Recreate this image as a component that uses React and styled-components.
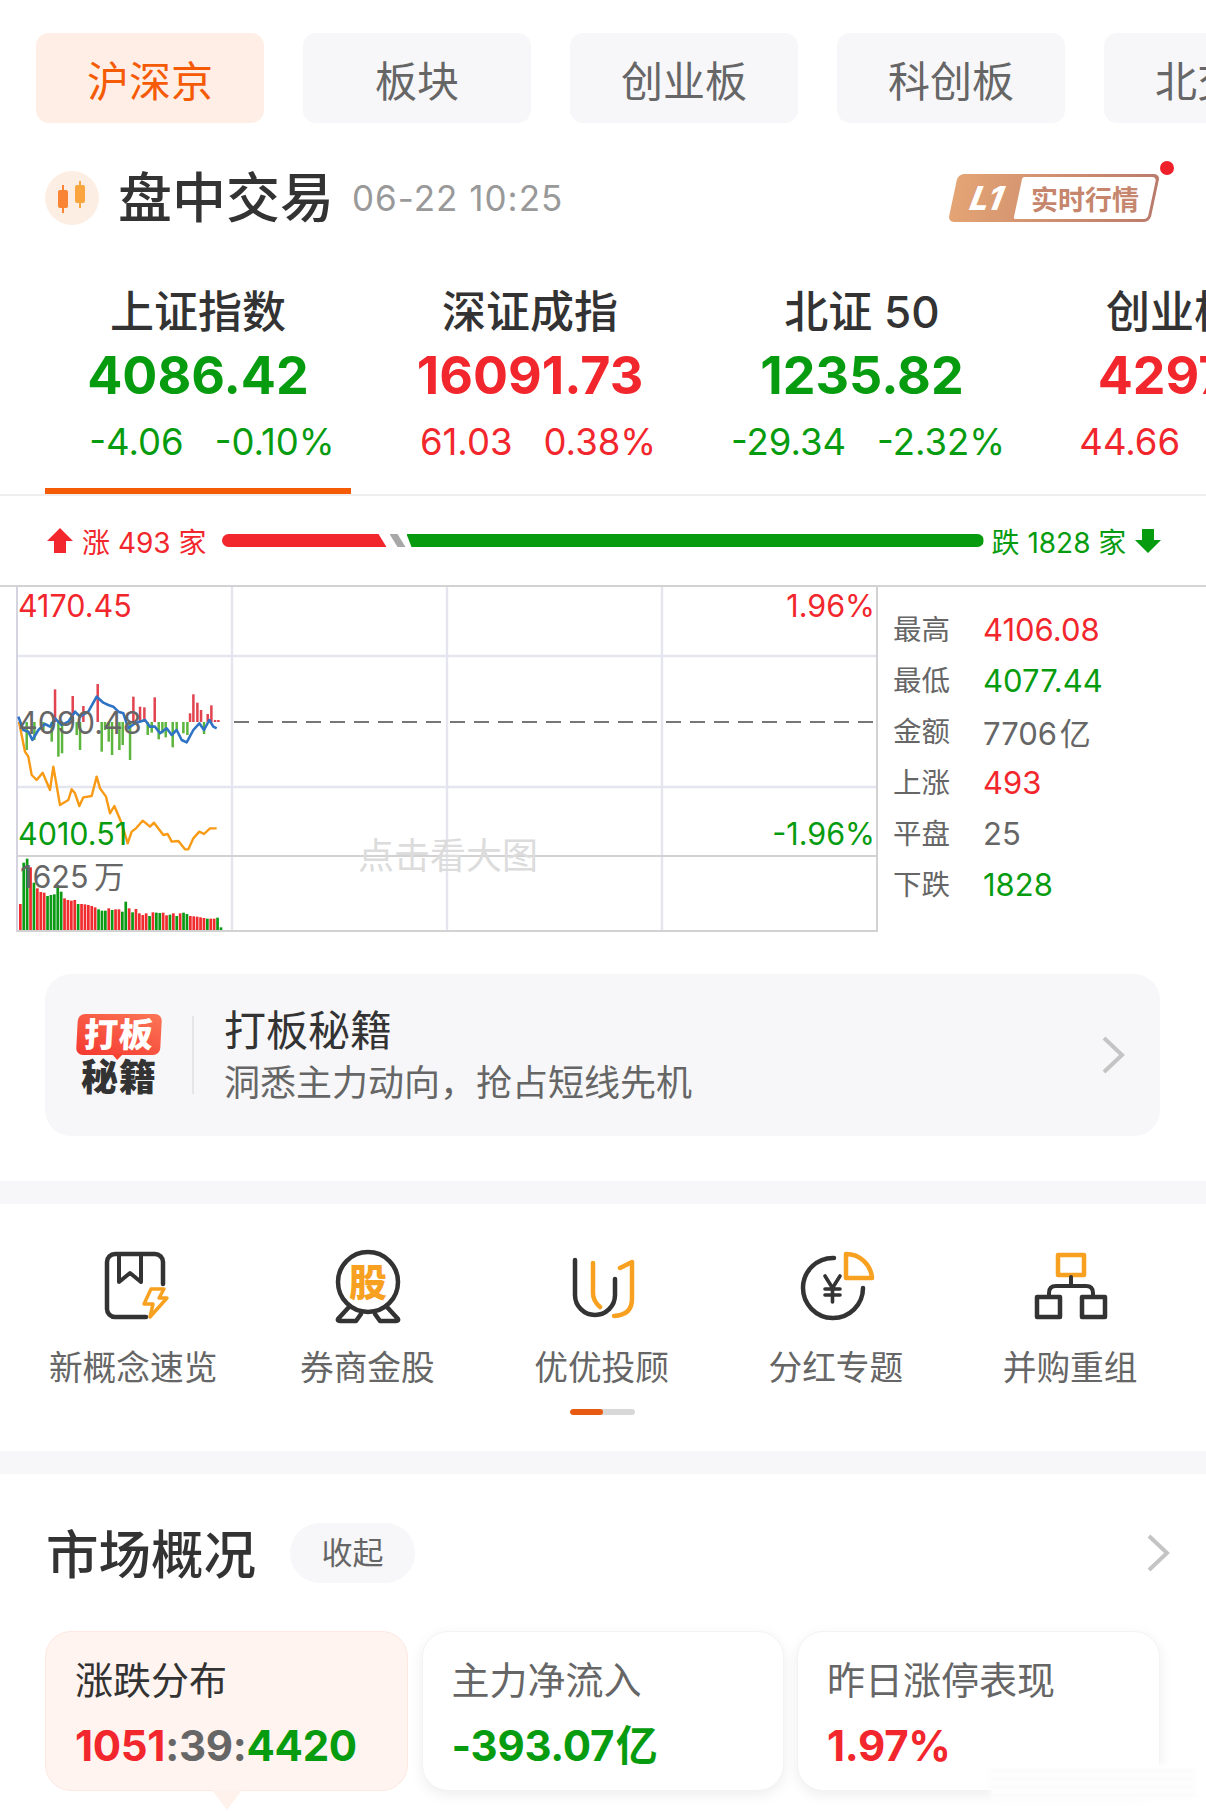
import React from 'react';
import styled, { createGlobalStyle } from 'styled-components';

const RED = '#f2272d';
const GREEN = '#079c0f';
const GRAY = '#666';
const toneColor = { up: RED, down: GREEN, flat: GRAY };

const GlobalStyle = createGlobalStyle`
  html, body { margin: 0; padding: 0; background: #fff; }
  body { font-family: Inter, "Noto Sans CJK SC", sans-serif; color: #333; }
  * { box-sizing: border-box; }
`;

const Page = styled.div`
  position: relative;
  width: 1206px;
  height: 1812px;
  overflow: hidden;
  background: #fff;
`;

const Tabs = styled.div`
  display: flex;
  gap: 39px;
  padding: 33px 0 0 36px;
`;
const Tab = styled.div`
  flex: 0 0 228px;
  height: 90px;
  display: flex;
  align-items: center;
  justify-content: center;
  border-radius: 13px;
  font-size: 42px;
  background: ${p => (p.$active ? '#ffeee6' : '#f7f7f9')};
  color: ${p => (p.$active ? '#f55a05' : GRAY)};
`;

const TradeHeader = styled.div`
  display: flex;
  align-items: center;
  height: 66px;
  margin-top: 42px;
  padding: 0 51px 0 45px;
`;
const TradeIcon = styled.svg`
  width: 54px;
  height: 54px;
  flex: none;
`;
const TradeTitle = styled.div`
  margin: 2px 0 0 19px;
  font-size: 54px;
  font-weight: 500;
  line-height: 66px;
  color: #333;
`;
const TradeTime = styled.div`
  margin-left: 18px;
  font-size: 35px;
  letter-spacing: 1px;
  color: #999;
`;
const BadgeWrap = styled.div`
  position: relative;
  width: 202px;
  height: 48px;
  margin-left: auto;
`;
const Badge = styled.div`
  display: flex;
  height: 100%;
  padding: 3px;
  border-radius: 6px;
  transform: skewX(-12deg);
  background: linear-gradient(90deg, #e4a474, #ba7b6c);
`;
const BadgeLevel = styled.div`
  flex: 0 0 62px;
  display: flex;
  align-items: center;
  justify-content: center;
  font-size: 33px;
  font-weight: 800;
  font-style: italic;
  color: #fff;
`;
const BadgeText = styled.div`
  flex: 1;
  display: flex;
  align-items: center;
  justify-content: center;
  border-radius: 2px 4px 4px 2px;
  background: #fff;
  font-size: 27px;
  font-weight: 700;
  color: #c5866d;
  span { display: block; transform: skewX(12deg); }
`;
const BadgeDot = styled.i`
  position: absolute;
  left: 207px;
  top: -13px;
  width: 14px;
  height: 14px;
  border-radius: 50%;
  background: #f0202a;
`;

const IndexRow = styled.div`
  display: flex;
  gap: 26px;
  height: 265px;
  padding-left: 45px;
  border-bottom: 2px solid #eee;
`;
const IndexItem = styled.div`
  flex: 0 0 306px;
  height: 263px;
  padding-top: 56px;
  display: flex;
  flex-direction: column;
  align-items: center;
  border-bottom: 6px solid ${p => (p.$active ? '#f55a05' : 'transparent')};
`;
const IndexName = styled.div`
  height: 50px;
  line-height: 50px;
  font-size: 44px;
  font-weight: 500;
  color: #333;
  white-space: nowrap;
`;
const IndexValue = styled.div`
  margin-top: 7px;
  height: 64px;
  line-height: 64px;
  font-size: 52px;
  font-weight: 700;
  white-space: nowrap;
  color: ${p => toneColor[p.$tone]};
`;
const IndexChange = styled.div`
  display: flex;
  gap: 31px;
  margin: 12px 0 0 ${p => p.$shift * 2}px;
  height: 44px;
  line-height: 44px;
  font-size: 36.5px;
  white-space: nowrap;
  color: ${p => toneColor[p.$tone]};
`;

const Breadth = styled.div`
  display: flex;
  align-items: center;
  height: 89px;
  padding: 0 46px;
`;
const BreadthLabel = styled.div`
  display: flex;
  align-items: center;
  gap: 8px;
  font-size: 28px;
  white-space: nowrap;
  color: ${p => toneColor[p.$tone]};
`;
const BreadthBar = styled.div`
  flex: 0 0 762px;
  margin: 0 ${p => p.$right}px 0 ${p => p.$left}px;
  display: flex;
  height: 13px;
`;
const BarRise = styled.div`
  flex: 0 0 165px;
  background: ${RED};
  border-radius: 7px 0 0 7px;
  clip-path: polygon(0 0, 157px 0, 100% 100%, 0 100%);
`;
const BarFlat = styled.div`
  flex: 0 0 16px;
  margin-left: 3px;
  background: #a8a8a8;
  clip-path: polygon(0 0, 8px 0, 100% 100%, 8px 100%);
`;
const BarFall = styled.div`
  flex: 1;
  margin-left: 1px;
  background: ${GREEN};
  border-radius: 0 7px 7px 0;
  clip-path: polygon(0 0, 100% 0, 100% 100%, 5px 100%);
`;

const Market = styled.div`
  display: flex;
  border-top: 2px solid #d4d4d4;
  padding-left: 16px;
`;
const ChartBox = styled.div`
  position: relative;
  flex: 0 0 862px;
  height: 345px;
  margin-top: -2px;
`;
const ChartSvg = styled.svg`
  display: block;
  width: 862px;
  height: 348px;
`;
const ChartLabel = styled.span`
  position: absolute;
  font-size: 30.5px;
  line-height: 34px;
  word-spacing: -3px;
  white-space: nowrap;
  top: ${p => p.$top}px;
  ${p => (p.$right !== undefined ? `right: ${p.$right}px;` : `left: ${p.$left}px;`)}
  color: ${p => toneColor[p.$tone]};
`;
const ChartHint = styled.span`
  position: absolute;
  left: 342px;
  top: 249px;
  font-size: 36px;
  line-height: 44px;
  color: #dcdcdc;
  white-space: nowrap;
`;
const Stats = styled.div`
  padding: 17px 0 0 15px;
`;
const StatRow = styled.div`
  display: flex;
  align-items: center;
  height: 51px;
`;
const StatLabel = styled.span`
  flex: 0 0 90px;
  margin-top: -4px;
  font-size: 28.5px;
  color: ${GRAY};
`;
const StatValue = styled.span`
  font-size: 31px;
  word-spacing: -6px;
  color: ${p => toneColor[p.$tone]};
`;

const Promo = styled.div`
  display: flex;
  align-items: center;
  height: 162px;
  margin: 44px 46px 0 45px;
  padding: 0 35px 0 31px;
  border-radius: 26px;
  background: #f7f7f9;
`;
const PromoLogo = styled.div`
  flex: 0 0 86px;
  display: flex;
  flex-direction: column;
  align-items: center;
`;
const PromoTag = styled.div`
  position: relative;
  width: 84px;
  height: 41px;
  border-radius: 7px;
  background: linear-gradient(20deg, #f5382f, #fb7656);
  transform: skewX(-3deg);
  color: #fff;
  font-size: 34px;
  font-weight: 900;
  line-height: 41px;
  text-align: center;
  letter-spacing: 1px;
  &::after {
    content: '';
    position: absolute;
    left: 36px;
    bottom: -5px;
    width: 11px;
    height: 6px;
    background: #f5432f;
    clip-path: polygon(0 0, 100% 0, 50% 100%);
  }
`;
const PromoName = styled.div`
  margin-top: 4px;
  font-size: 37px;
  line-height: 38px;
  font-weight: 900;
  color: #333;
  letter-spacing: 1px;
  white-space: nowrap;
`;
const PromoDivider = styled.div`
  width: 2px;
  height: 78px;
  margin: 0 30px;
  background: #e6e6e8;
`;
const PromoText = styled.div`
  flex: 1;
`;
const PromoTitle = styled.div`
  font-size: 42px;
  line-height: 56px;
  color: #333;
`;
const PromoSub = styled.div`
  font-size: 36px;
  line-height: 48px;
  color: ${GRAY};
`;
const Chevron = styled.svg`
  flex: none;
  width: 24px;
  height: 38px;
`;

const Band = styled.div`
  height: 23px;
  background: #f7f7f9;
  margin-top: ${p => p.$top || 0}px;
`;

const Shortcuts = styled.div`
  height: 247px;
  padding: 43px 0 0 16px;
`;
const ShortcutGrid = styled.div`
  display: grid;
  grid-template-columns: repeat(5, 234.25px);
`;
const Shortcut = styled.div`
  display: flex;
  flex-direction: column;
  align-items: center;
`;
const ShortcutIcon = styled.svg`
  width: 80px;
  height: 80px;
  fill: none;
  stroke-linecap: round;
  stroke-linejoin: round;
`;
const ShortcutName = styled.div`
  margin-top: 21px;
  font-size: 33.7px;
  line-height: 40px;
  color: ${GRAY};
  white-space: nowrap;
`;
const Pager = styled.div`
  width: 65px;
  height: 6px;
  margin: 21px 0 0 554px;
  border-radius: 3px;
  background: #d8d8d8;
  overflow: hidden;
  &::before {
    content: '';
    display: block;
    width: 33px;
    height: 6px;
    border-radius: 3px;
    background: #e85a12;
  }
`;

const Overview = styled.div`
  padding: 49px 36px 0 46px;
`;
const OverviewHead = styled.div`
  display: flex;
  align-items: center;
  height: 60px;
`;
const OverviewTitle = styled.div`
  margin-top: -4px;
  font-size: 52.5px;
  font-weight: 500;
  color: #333;
`;
const Collapse = styled.div`
  width: 125px;
  height: 60px;
  margin-left: 34px;
  border-radius: 30px;
  background: #f7f7f9;
  color: ${GRAY};
  font-size: 31px;
  line-height: 60px;
  text-align: center;
`;
const OverviewSpacer = styled.div`
  flex: 1;
`;
const OverviewGrid = styled.div`
  display: grid;
  grid-template-columns: 363px 362px 362.5px;
  gap: 13.5px;
  margin: 48px 0 0 -1px;
`;
const OverviewCard = styled.div`
  position: relative;
  height: 160px;
  padding: 25px 0 0 29px;
  border-radius: 26px;
  background: ${p => (p.$active ? '#fff4f0' : '#fff')};
  border: 1px solid ${p => (p.$active ? '#fde9e1' : '#f3f3f3')};
  box-shadow: ${p => (p.$active ? 'none' : '0 4px 14px rgba(0, 0, 0, 0.07)')};
  ${p => p.$active && `
    &::after {
      content: '';
      position: absolute;
      left: 166px;
      bottom: -20px;
      width: 30px;
      height: 20px;
      background: #fff1ec;
      clip-path: polygon(0 0, 100% 0, 50% 100%);
    }
  `}
`;
const CardTitle = styled.div`
  font-size: 38px;
  line-height: 46px;
  color: ${p => (p.$active ? '#333' : GRAY)};
`;
const CardValue = styled.div`
  margin-top: 17px;
  font-size: 42px;
  font-weight: 700;
  line-height: 52px;
  white-space: nowrap;
  word-spacing: -8px;
  letter-spacing: -0.3px;
`;
const Tone = styled.span`
  color: ${p => toneColor[p.$tone]};
`;
const Watermark = styled.div`
  position: absolute;
  left: 990px;
  top: 1764px;
  width: 206px;
  height: 36px;
  background: repeating-linear-gradient(180deg, #fff 0 6px, #f4f4f4 6px 8px);
  filter: blur(2px);
`;

const tabs = ['沪深京', '板块', '创业板', '科创板', '北交所'];

const indices = [
  { name: '上证指数', value: '4086.42', change: '-4.06', pct: '-0.10%', tone: 'down', active: true, shift: 14 },
  { name: '深证成指', value: '16091.73', change: '61.03', pct: '0.38%', tone: 'up', shift: 8 },
  { name: '北证 50', value: '1235.82', change: '-29.34', pct: '-2.32%', tone: 'down', shift: 6 },
  { name: '创业板指', value: '4297.15', change: '44.66', pct: '1.05%', tone: 'up', shift: 4 },
];

const stats = [
  ['最高', '4106.08', 'up'],
  ['最低', '4077.44', 'down'],
  ['金额', '7706 亿', 'flat'],
  ['上涨', '493', 'up'],
  ['平盘', '25', 'flat'],
  ['下跌', '1828', 'down'],
];

// chart data read off the picture, in 3x crop coordinates (x, 580 + y / 3)
const blueLine = [[55,410],[70,450],[85,455],[97,480],[115,450],[135,432],[150,440],[165,415],[185,435],[205,425],[225,395],[240,410],[265,395],[290,350],[310,368],[325,375],[340,380],[355,395],[370,400],[385,445],[405,430],[435,420],[450,440],[465,440],[480,460],[500,445],[515,465],[530,450],[545,480],[560,487],[580,450],[598,430],[612,450],[628,420],[640,440],[650,445]];
const orangeLine = [[57,425],[75,515],[85,530],[95,585],[110,600],[128,578],[150,630],[160,560],[180,675],[205,660],[215,628],[225,640],[238,678],[250,652],[275,648],[290,590],[300,625],[318,650],[330,700],[343,678],[365,730],[383,790],[395,755],[408,745],[428,722],[450,740],[462,728],[490,765],[503,762],[515,785],[535,783],[555,808],[565,808],[580,775],[598,755],[612,762],[630,745],[650,745]];
const riseBars = [[165,328],[218,348],[250,378],[293,312],[400,350],[420,380],[433,382],[464,352],[570,400],[580,343],[592,368],[603,390],[623,402],[634,376],[645,420],[655,420]];
const fallBars = [[80,510],[103,480],[130,450],[155,485],[175,530],[186,520],[230,465],[240,510],[305,515],[315,450],[326,485],[336,525],[358,510],[368,495],[390,540],[443,465],[455,458],[476,478],[487,460],[497,472],[518,502],[530,450],[550,460],[562,465],[612,462]];
const volumes = [['r',972],['g',848],['g',836],['r',862],['g',908],['r',925],['r',936],['r',938],['g',948],['g',945],['g',943],['g',915],['g',935],['r',955],['r',960],['r',962],['r',960],['g',972],['r',972],['r',973],['r',975],['r',978],['r',982],['g',988],['g',992],['g',992],['r',985],['g',990],['r',988],['r',988],['g',995],['g',965],['r',985],['g',997],['r',987],['r',1000],['r',1005],['r',1000],['g',1008],['r',997],['g',998],['g',999],['r',998],['r',1006],['g',1004],['r',1000],['g',1008],['r',1000],['g',998],['g',1002],['r',1008],['r',1009],['r',1010],['r',1012],['r',1014],['g',1016],['r',1016],['r',1016],['g',1013],['g',1042]];

const px = x => x / 3;
const py = y => 580 + y / 3;
const points = list => list.map(([x, y]) => `${px(x)},${py(y)}`).join(' ');

const MinuteChart = () => (
  <ChartSvg viewBox="16 585 862 348">
    <g stroke="#e4e5ee" strokeWidth="2.4">
      <path d="M17 656H877M17 787H877" />
      <path d="M232 587V930M447 587V930M662 587V930" />
    </g>
    <path d="M16 586H878M16 856H878M16 931H878M877 586V931" stroke="#d2d2d2" strokeWidth="2" fill="none" />
    <path d="M17 586V931" stroke="#d3d4e0" strokeWidth="2" />
    <path d="M234 722H877" stroke="#777" strokeWidth="1.8" strokeDasharray="15 9" />
    {riseBars.map(([x, y]) => (
      <rect key={x} x={px(x) - 1.2} y={py(y)} width="2.5" height={722 - py(y)} fill="#e2444f" />
    ))}
    {fallBars.map(([x, y]) => (
      <rect key={x} x={px(x) - 1.2} y="722" width="2.5" height={py(y) - 722} fill="#5cb53c" />
    ))}
    <polyline points={points(orangeLine)} fill="none" stroke="#f89a14" strokeWidth="2.4" strokeLinejoin="round" />
    <polyline points={points(blueLine)} fill="none" stroke="#2f73c4" strokeWidth="2.6" strokeLinejoin="round" />
    {volumes.map(([c, y], i) => (
      <rect key={i} x={19 + i * 3.4} y={py(y)} width="2.7" height={930 - py(y)} fill={c === 'r' ? '#f02c2f' : '#0a9a13'} />
    ))}
  </ChartSvg>
);

const Arrow = ({ down, color }) => (
  <svg width="28" height="26" viewBox="0 0 28 26" style={{ flex: 'none' }}>
    <path
      d={down ? 'M8 1H20V12H27L14 25L1 12H8Z' : 'M8 25H20V13H27L14 0L1 13H8Z'}
      fill={color}
    />
  </svg>
);

const ChevronIcon = () => (
  <Chevron viewBox="0 0 24 38">
    <polyline points="3,2 21,19 3,36" fill="none" stroke="#c4c4c4" strokeWidth="4" />
  </Chevron>
);

const DARK = '#333';
const AMBER = '#f8a01f';

const BookIcon = () => (
  <ShortcutIcon viewBox="0 0 80 80">
    <path d="M70 37V15a8 8 0 0 0-8-8H22a8 8 0 0 0-8 8V62a8 8 0 0 0 8 8H53" stroke={DARK} strokeWidth="4.5" />
    <path d="M26 8V35L37 26L48 35V8" stroke={DARK} strokeWidth="4" />
    <path d="M58 42H71L66 51H74L57 70L60 57H51Z" stroke={AMBER} strokeWidth="3.4" />
  </ShortcutIcon>
);

const MedalIcon = () => (
  <ShortcutIcon viewBox="0 0 80 80">
    <circle cx="41" cy="35" r="30" stroke={DARK} strokeWidth="4.5" />
    <path d="M22 60L11 72Q10 74 13 74H29L34 67M60 60L71 72Q72 74 69 74H53L48 67" stroke={DARK} strokeWidth="4.5" />
    <text x="41" y="49" textAnchor="middle" fontSize="38" fontWeight="900" fill={AMBER} stroke="none" fontFamily='"Noto Sans CJK SC", sans-serif'>股</text>
  </ShortcutIcon>
);

const AdvisorIcon = () => (
  <ShortcutIcon viewBox="0 0 80 80">
    <path d="M13 13V48a20 20 0 0 0 40 0V32" stroke={DARK} strokeWidth="4.5" />
    <path d="M31 16V46Q31 54 38 60" stroke={AMBER} strokeWidth="4.5" />
    <path d="M58 21L70 15V52Q70 68 52 69" stroke={AMBER} strokeWidth="4.5" />
  </ShortcutIcon>
);

const DividendIcon = () => (
  <ShortcutIcon viewBox="0 0 80 80">
    <path d="M38 11A30 30 0 1 0 67 41" stroke={DARK} strokeWidth="4.5" />
    <path d="M29 29L36.5 41L44 29M29 42H44M29 48H44M36.5 41V55" stroke={DARK} strokeWidth="3.6" />
    <path d="M50 7A26 26 0 0 1 76 31H50Z" stroke={AMBER} strokeWidth="4.5" />
  </ShortcutIcon>
);

const MergeIcon = () => (
  <ShortcutIcon viewBox="0 0 80 80">
    <rect x="28" y="8" width="26" height="20" stroke={AMBER} strokeWidth="4.5" />
    <path d="M41 30V39M19 48V46Q19 39 26 39H56Q63 39 63 46V48" stroke={DARK} strokeWidth="4" />
    <rect x="7" y="50" width="23" height="20" stroke={DARK} strokeWidth="4.5" />
    <rect x="52" y="50" width="23" height="20" stroke={DARK} strokeWidth="4.5" />
  </ShortcutIcon>
);

const shortcuts = [
  ['新概念速览', BookIcon],
  ['券商金股', MedalIcon],
  ['优优投顾', AdvisorIcon],
  ['分红专题', DividendIcon],
  ['并购重组', MergeIcon],
];

const App = () => (
  <Page>
    <GlobalStyle />
    <Tabs>
      {tabs.map((t, i) => (
        <Tab key={t} $active={i === 0}>{t}</Tab>
      ))}
    </Tabs>

    <TradeHeader>
      <TradeIcon viewBox="0 0 54 54">
        <circle cx="27" cy="27" r="27" fill="#fdeee4" />
        <path d="M18 14V42" stroke="#f98534" strokeWidth="2" />
        <rect x="13" y="19" width="10" height="18" rx="2" fill="#f98534" />
        <path d="M35 10V37" stroke="#fba53f" strokeWidth="2" />
        <rect x="30" y="14" width="10" height="18" rx="2" fill="#fba53f" />
      </TradeIcon>
      <TradeTitle>盘中交易</TradeTitle>
      <TradeTime>06-22 10:25</TradeTime>
      <BadgeWrap>
        <Badge>
          <BadgeLevel>L1</BadgeLevel>
          <BadgeText><span>实时行情</span></BadgeText>
        </Badge>
        <BadgeDot />
      </BadgeWrap>
    </TradeHeader>

    <IndexRow>
      {indices.map(item => (
        <IndexItem key={item.name} $active={item.active}>
          <IndexName>{item.name}</IndexName>
          <IndexValue $tone={item.tone}>{item.value}</IndexValue>
          <IndexChange $tone={item.tone} $shift={item.shift}>
            <span>{item.change}</span>
            <span>{item.pct}</span>
          </IndexChange>
        </IndexItem>
      ))}
    </IndexRow>

    <Breadth>
      <BreadthLabel $tone="up">
        <Arrow color={RED} />
        <span>涨 493 家</span>
      </BreadthLabel>
      <BreadthBar $left={15} $right={8}>
        <BarRise />
        <BarFlat />
        <BarFall />
      </BreadthBar>
      <BreadthLabel $tone="down">
        <span>跌 1828 家</span>
        <Arrow down color={GREEN} />
      </BreadthLabel>
    </Breadth>

    <Market>
      <ChartBox>
        <MinuteChart />
        <ChartLabel $left={2} $top={4} $tone="up">4170.45</ChartLabel>
        <ChartLabel $right={3} $top={4} $tone="up">1.96%</ChartLabel>
        <ChartLabel $left={2} $top={121} $tone="flat">4090.48</ChartLabel>
        <ChartLabel $left={2} $top={232} $tone="down">4010.51</ChartLabel>
        <ChartLabel $right={3} $top={232} $tone="down">-1.96%</ChartLabel>
        <ChartLabel $left={4} $top={275} $tone="flat">1625 万</ChartLabel>
        <ChartHint>点击看大图</ChartHint>
      </ChartBox>
      <Stats>
        {stats.map(([label, value, tone]) => (
          <StatRow key={label}>
            <StatLabel>{label}</StatLabel>
            <StatValue $tone={tone}>{value}</StatValue>
          </StatRow>
        ))}
      </Stats>
    </Market>

    <Promo>
      <PromoLogo>
        <PromoTag>打板</PromoTag>
        <PromoName>秘籍</PromoName>
      </PromoLogo>
      <PromoDivider />
      <PromoText>
        <PromoTitle>打板秘籍</PromoTitle>
        <PromoSub>{'洞悉主力动向\uFF0C抢占短线先机'}</PromoSub>
      </PromoText>
      <ChevronIcon />
    </Promo>

    <Band $top={45} />

    <Shortcuts>
      <ShortcutGrid>
        {shortcuts.map(([name, Icon]) => (
          <Shortcut key={name}>
            <Icon />
            <ShortcutName>{name}</ShortcutName>
          </Shortcut>
        ))}
      </ShortcutGrid>
      <Pager />
    </Shortcuts>

    <Band />

    <Overview>
      <OverviewHead>
        <OverviewTitle>市场概况</OverviewTitle>
        <Collapse>收起</Collapse>
        <OverviewSpacer />
        <ChevronIcon />
      </OverviewHead>
      <OverviewGrid>
        <OverviewCard $active>
          <CardTitle $active>涨跌分布</CardTitle>
          <CardValue>
            <Tone $tone="up">1051</Tone>
            <Tone $tone="flat">:39:</Tone>
            <Tone $tone="down">4420</Tone>
          </CardValue>
        </OverviewCard>
        <OverviewCard>
          <CardTitle>主力净流入</CardTitle>
          <CardValue><Tone $tone="down">-393.07 亿</Tone></CardValue>
        </OverviewCard>
        <OverviewCard>
          <CardTitle>昨日涨停表现</CardTitle>
          <CardValue><Tone $tone="up">1.97%</Tone></CardValue>
        </OverviewCard>
      </OverviewGrid>
    </Overview>
    <Watermark />
  </Page>
);

export default App;
